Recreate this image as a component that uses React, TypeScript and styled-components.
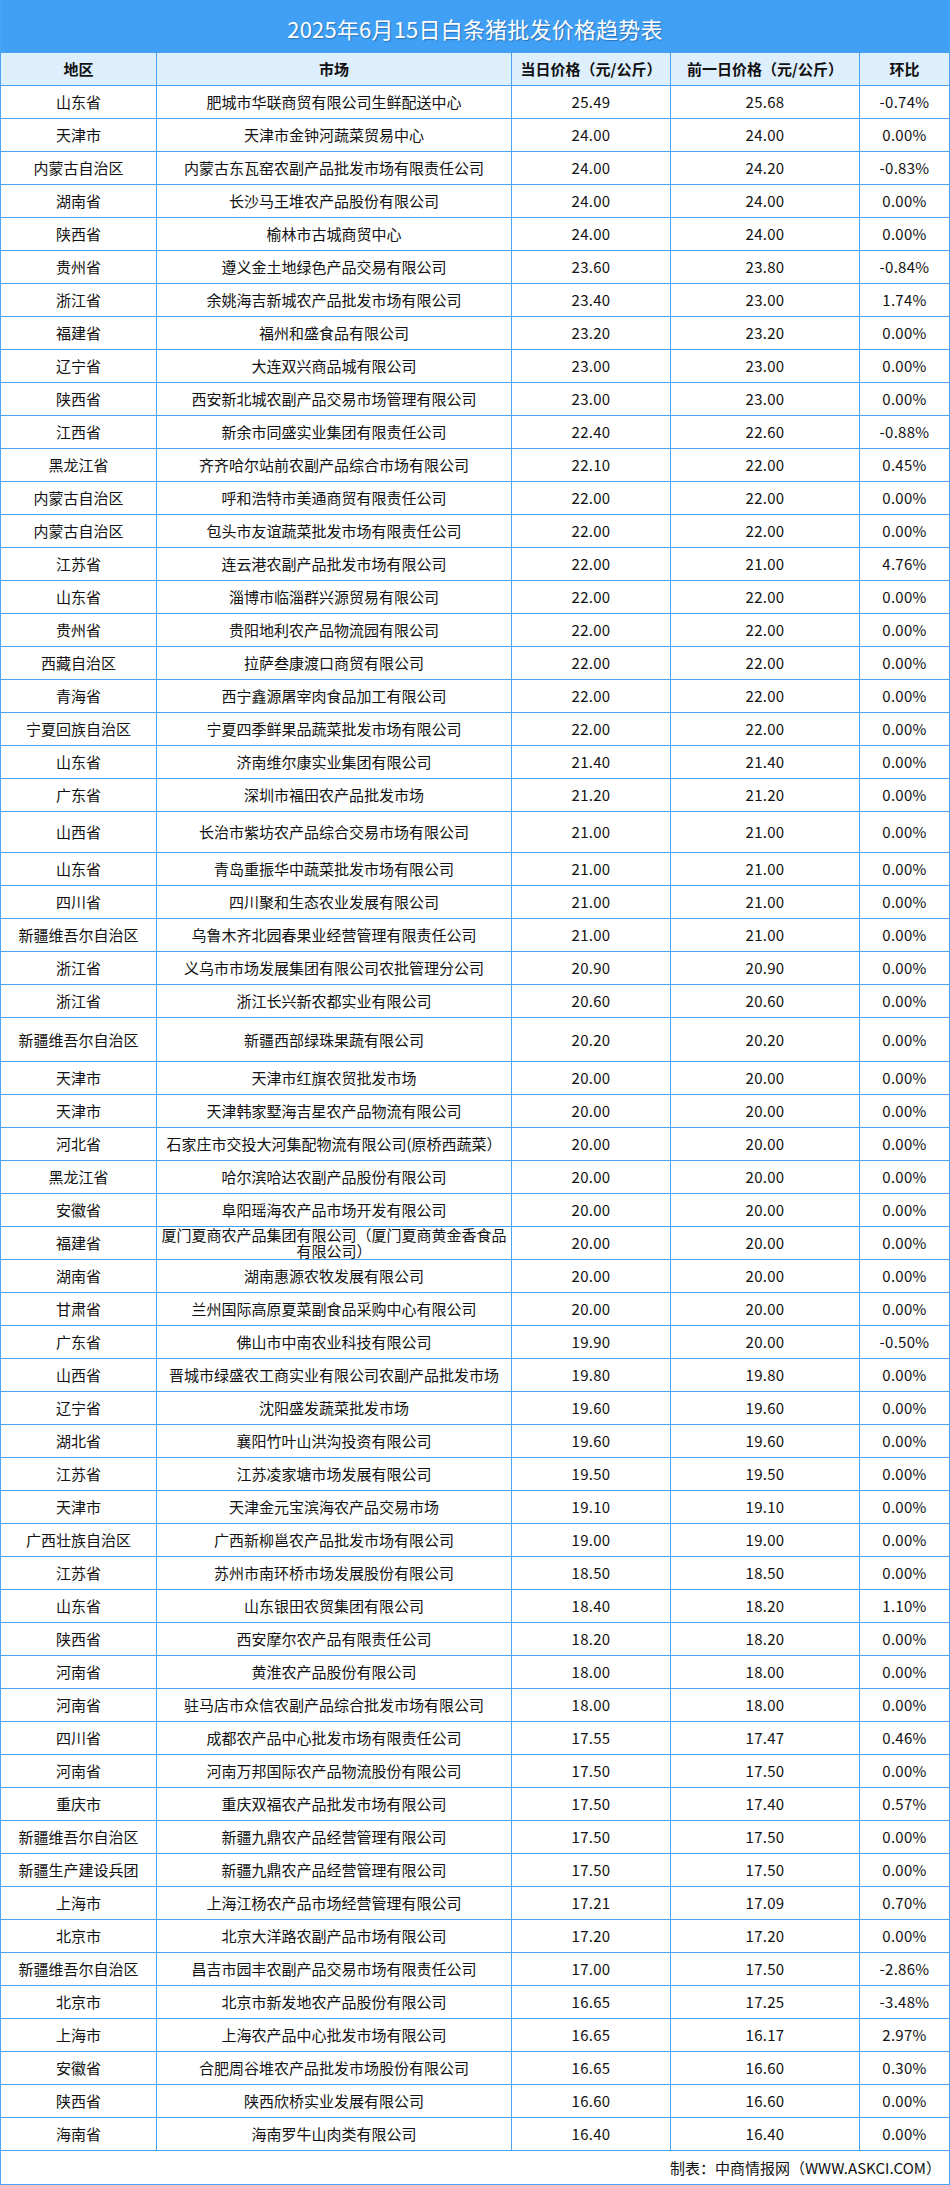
import React from "react";
import styled, { createGlobalStyle } from "styled-components";

const GlobalStyle = createGlobalStyle`
  html, body {
    margin: 0;
    padding: 0;
    background: #ffffff;
  }
  body {
    font-family: "Noto Sans CJK SC", "Noto Sans", sans-serif;
    color: #111111;
  }
`;

const LINE = "#4aa2f2";

type Row = [string, string, string, string, string, number?];

const rows: Row[] = [
  ["山东省", "肥城市华联商贸有限公司生鲜配送中心", "25.49", "25.68", "-0.74%"],
  ["天津市", "天津市金钟河蔬菜贸易中心", "24.00", "24.00", "0.00%"],
  ["内蒙古自治区", "内蒙古东瓦窑农副产品批发市场有限责任公司", "24.00", "24.20", "-0.83%"],
  ["湖南省", "长沙马王堆农产品股份有限公司", "24.00", "24.00", "0.00%"],
  ["陕西省", "榆林市古城商贸中心", "24.00", "24.00", "0.00%"],
  ["贵州省", "遵义金土地绿色产品交易有限公司", "23.60", "23.80", "-0.84%"],
  ["浙江省", "余姚海吉新城农产品批发市场有限公司", "23.40", "23.00", "1.74%"],
  ["福建省", "福州和盛食品有限公司", "23.20", "23.20", "0.00%"],
  ["辽宁省", "大连双兴商品城有限公司", "23.00", "23.00", "0.00%"],
  ["陕西省", "西安新北城农副产品交易市场管理有限公司", "23.00", "23.00", "0.00%"],
  ["江西省", "新余市同盛实业集团有限责任公司", "22.40", "22.60", "-0.88%"],
  ["黑龙江省", "齐齐哈尔站前农副产品综合市场有限公司", "22.10", "22.00", "0.45%"],
  ["内蒙古自治区", "呼和浩特市美通商贸有限责任公司", "22.00", "22.00", "0.00%"],
  ["内蒙古自治区", "包头市友谊蔬菜批发市场有限责任公司", "22.00", "22.00", "0.00%"],
  ["江苏省", "连云港农副产品批发市场有限公司", "22.00", "21.00", "4.76%"],
  ["山东省", "淄博市临淄群兴源贸易有限公司", "22.00", "22.00", "0.00%"],
  ["贵州省", "贵阳地利农产品物流园有限公司", "22.00", "22.00", "0.00%"],
  ["西藏自治区", "拉萨叁康渡口商贸有限公司", "22.00", "22.00", "0.00%"],
  ["青海省", "西宁鑫源屠宰肉食品加工有限公司", "22.00", "22.00", "0.00%"],
  ["宁夏回族自治区", "宁夏四季鲜果品蔬菜批发市场有限公司", "22.00", "22.00", "0.00%"],
  ["山东省", "济南维尔康实业集团有限公司", "21.40", "21.40", "0.00%"],
  ["广东省", "深圳市福田农产品批发市场", "21.20", "21.20", "0.00%"],
  ["山西省", "长治市紫坊农产品综合交易市场有限公司", "21.00", "21.00", "0.00%", 41],
  ["山东省", "青岛重振华中蔬菜批发市场有限公司", "21.00", "21.00", "0.00%"],
  ["四川省", "四川聚和生态农业发展有限公司", "21.00", "21.00", "0.00%"],
  ["新疆维吾尔自治区", "乌鲁木齐北园春果业经营管理有限责任公司", "21.00", "21.00", "0.00%"],
  ["浙江省", "义乌市市场发展集团有限公司农批管理分公司", "20.90", "20.90", "0.00%"],
  ["浙江省", "浙江长兴新农都实业有限公司", "20.60", "20.60", "0.00%"],
  ["新疆维吾尔自治区", "新疆西部绿珠果蔬有限公司", "20.20", "20.20", "0.00%", 44],
  ["天津市", "天津市红旗农贸批发市场", "20.00", "20.00", "0.00%"],
  ["天津市", "天津韩家墅海吉星农产品物流有限公司", "20.00", "20.00", "0.00%"],
  ["河北省", "石家庄市交投大河集配物流有限公司(原桥西蔬菜）", "20.00", "20.00", "0.00%"],
  ["黑龙江省", "哈尔滨哈达农副产品股份有限公司", "20.00", "20.00", "0.00%"],
  ["安徽省", "阜阳瑶海农产品市场开发有限公司", "20.00", "20.00", "0.00%"],
  ["福建省", "厦门夏商农产品集团有限公司（厦门夏商黄金香食品有限公司）", "20.00", "20.00", "0.00%"],
  ["湖南省", "湖南惠源农牧发展有限公司", "20.00", "20.00", "0.00%"],
  ["甘肃省", "兰州国际高原夏菜副食品采购中心有限公司", "20.00", "20.00", "0.00%"],
  ["广东省", "佛山市中南农业科技有限公司", "19.90", "20.00", "-0.50%"],
  ["山西省", "晋城市绿盛农工商实业有限公司农副产品批发市场", "19.80", "19.80", "0.00%"],
  ["辽宁省", "沈阳盛发蔬菜批发市场", "19.60", "19.60", "0.00%"],
  ["湖北省", "襄阳竹叶山洪沟投资有限公司", "19.60", "19.60", "0.00%"],
  ["江苏省", "江苏凌家塘市场发展有限公司", "19.50", "19.50", "0.00%"],
  ["天津市", "天津金元宝滨海农产品交易市场", "19.10", "19.10", "0.00%"],
  ["广西壮族自治区", "广西新柳邕农产品批发市场有限公司", "19.00", "19.00", "0.00%"],
  ["江苏省", "苏州市南环桥市场发展股份有限公司", "18.50", "18.50", "0.00%"],
  ["山东省", "山东银田农贸集团有限公司", "18.40", "18.20", "1.10%"],
  ["陕西省", "西安摩尔农产品有限责任公司", "18.20", "18.20", "0.00%"],
  ["河南省", "黄淮农产品股份有限公司", "18.00", "18.00", "0.00%"],
  ["河南省", "驻马店市众信农副产品综合批发市场有限公司", "18.00", "18.00", "0.00%"],
  ["四川省", "成都农产品中心批发市场有限责任公司", "17.55", "17.47", "0.46%"],
  ["河南省", "河南万邦国际农产品物流股份有限公司", "17.50", "17.50", "0.00%"],
  ["重庆市", "重庆双福农产品批发市场有限公司", "17.50", "17.40", "0.57%"],
  ["新疆维吾尔自治区", "新疆九鼎农产品经营管理有限公司", "17.50", "17.50", "0.00%"],
  ["新疆生产建设兵团", "新疆九鼎农产品经营管理有限公司", "17.50", "17.50", "0.00%"],
  ["上海市", "上海江杨农产品市场经营管理有限公司", "17.21", "17.09", "0.70%"],
  ["北京市", "北京大洋路农副产品市场有限公司", "17.20", "17.20", "0.00%"],
  ["新疆维吾尔自治区", "昌吉市园丰农副产品交易市场有限责任公司", "17.00", "17.50", "-2.86%"],
  ["北京市", "北京市新发地农产品股份有限公司", "16.65", "17.25", "-3.48%"],
  ["上海市", "上海农产品中心批发市场有限公司", "16.65", "16.17", "2.97%"],
  ["安徽省", "合肥周谷堆农产品批发市场股份有限公司", "16.65", "16.60", "0.30%"],
  ["陕西省", "陕西欣桥实业发展有限公司", "16.60", "16.60", "0.00%"],
  ["海南省", "海南罗牛山肉类有限公司", "16.40", "16.40", "0.00%"],
];

const Sheet = styled.div`
  width: 950px;
  box-sizing: border-box;
  border-left: 1px solid ${LINE};
  border-right: 1px solid ${LINE};
  border-bottom: 1px solid ${LINE};
`;

const TitleBar = styled.div`
  height: 53px;
  box-sizing: border-box;
  border-bottom: 1px solid ${LINE};
  background: #40a0f5;
  display: flex;
  align-items: center;
  justify-content: center;
  padding-top: 4px;
  color: #ffffff;
  font-size: 22px;
  letter-spacing: 0.2px;
  text-shadow: 1px 1px 1px rgba(20, 60, 110, 0.45);
`;

const GridRow = styled.div<{ $height: number; $head?: boolean }>`
  display: grid;
  grid-template-columns: 156px 355px 159px 189px 1fr;
  height: ${(p) => p.$height}px;
  box-sizing: border-box;
  border-bottom: 1px solid ${LINE};
  background: ${(p) => (p.$head ? "#ddeefc" : "#ffffff")};
  font-weight: ${(p) => (p.$head ? 700 : 400)};
  font-size: 15px;
`;

const Cell = styled.div`
  display: flex;
  align-items: center;
  justify-content: center;
  text-align: center;
  padding: 0 4px;
  line-height: 16px;
  min-height: 0;
  border-right: 1px solid ${LINE};

  &:last-child {
    border-right: none;
  }
`;

const NumCell = styled(Cell)`
  letter-spacing: 0.3px;
`;

const FooterRow = styled.div`
  height: 33px;
  display: flex;
  align-items: center;
  justify-content: flex-end;
  padding-right: 8px;
  font-size: 15px;
`;

export default function App() {
  return (
    <>
      <GlobalStyle />
      <Sheet>
        <TitleBar>2025年6月15日白条猪批发价格趋势表</TitleBar>
        <GridRow $height={33} $head>
          <Cell>地区</Cell>
          <Cell>市场</Cell>
          <Cell>当日价格（元/公斤）</Cell>
          <Cell>前一日价格（元/公斤）</Cell>
          <Cell>环比</Cell>
        </GridRow>
        {rows.map(([region, market, today, prev, ratio, h], i) => (
          <GridRow key={i} $height={h ?? 33}>
            <Cell>{region}</Cell>
            <Cell>{market}</Cell>
            <NumCell>{today}</NumCell>
            <NumCell>{prev}</NumCell>
            <NumCell>{ratio}</NumCell>
          </GridRow>
        ))}
        <FooterRow>制表：中商情报网（WWW.ASKCI.COM）</FooterRow>
      </Sheet>
    </>
  );
}
